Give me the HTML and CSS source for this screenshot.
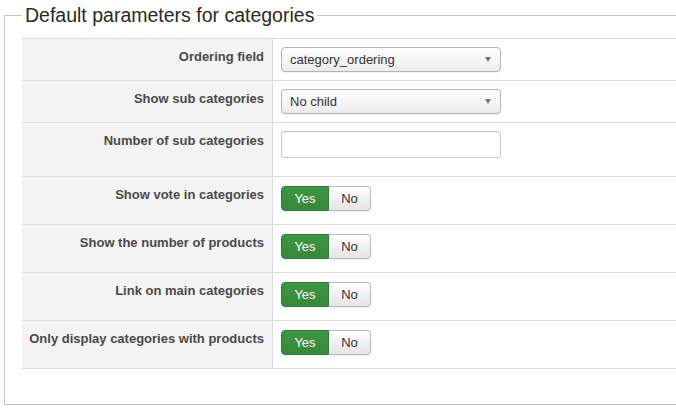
FILE: index.html
```html
<!DOCTYPE html>
<html>
<head>
<meta charset="utf-8">
<link rel="stylesheet" href="styles.css">
</head>
<body>
<fieldset class="panel">
  <legend class="panel-title">Default parameters for categories</legend>
  <div class="params">
    <div class="row">
      <div class="label">Ordering field</div>
      <div class="control">
        <div class="select"><span>category_ordering</span><i class="caret"></i></div>
      </div>
    </div>
    <div class="row">
      <div class="label">Show sub categories</div>
      <div class="control">
        <div class="select"><span>No child</span><i class="caret"></i></div>
      </div>
    </div>
    <div class="row">
      <div class="label">Number of sub categories</div>
      <div class="control">
        <div class="input"></div>
      </div>
    </div>
    <div class="row">
      <div class="label">Show vote in categories</div>
      <div class="control toggle-cell">
        <div class="toggle"><span class="btn yes">Yes</span><span class="btn no">No</span></div>
      </div>
    </div>
    <div class="row">
      <div class="label">Show the number of products</div>
      <div class="control toggle-cell">
        <div class="toggle"><span class="btn yes">Yes</span><span class="btn no">No</span></div>
      </div>
    </div>
    <div class="row">
      <div class="label">Link on main categories</div>
      <div class="control toggle-cell">
        <div class="toggle"><span class="btn yes">Yes</span><span class="btn no">No</span></div>
      </div>
    </div>
    <div class="row last">
      <div class="label">Only display categories with products</div>
      <div class="control toggle-cell">
        <div class="toggle"><span class="btn yes">Yes</span><span class="btn no">No</span></div>
      </div>
    </div>
  </div>
</fieldset>
</body>
</html>
```

FILE: styles.css
```css
html, body {
  margin: 0;
  padding: 0;
  background: #fff;
  overflow: hidden;
}

body {
  font-family: "Liberation Sans", Arial, sans-serif;
  color: #333;
  width: 676px;
  height: 410px;
}

.panel {
  margin: 0 0 0 4px;
  padding: 8px 0 35px 17px;
  border: 1px solid #c4c4c4;
  border-right: none;
  width: 672px;
  box-sizing: border-box;
  min-width: 0;
}

.panel-title {
  padding: 0 3px;
  margin: 0;
  font-size: 19.5px;
  line-height: 30px;
  color: #2a2a2a;
  font-weight: normal;
}

.params {
  display: flex;
  flex-direction: column;
}

.row {
  display: flex;
  border-top: 1px solid #ddd;
}

.row.last {
  border-bottom: 1px solid #ddd;
}

.label {
  width: 251px;
  flex: none;
  box-sizing: border-box;
  padding: 9px 8px 0 0;
  background: #f3f3f3;
  border-right: 1px solid #ddd;
  text-align: right;
  font-size: 13px;
  font-weight: bold;
  line-height: 18px;
  color: #4a4a4a;
}

.control {
  padding: 8px 0 8px 8px;
}

.toggle-cell {
  padding: 9px 0 13px 8px;
}

.select {
  width: 220px;
  height: 25px;
  box-sizing: border-box;
  border: 1px solid #b4b4b4;
  border-radius: 4px;
  background: linear-gradient(#ffffff, #ebebeb);
  box-shadow: 0 1px 1px rgba(0,0,0,0.06);
  display: flex;
  align-items: center;
  justify-content: space-between;
  padding: 0 9px 0 8px;
  font-size: 13px;
  color: #333;
}

.caret {
  width: 0;
  height: 0;
  border-left: 3.5px solid transparent;
  border-right: 3.5px solid transparent;
  border-top: 5px solid #777;
}

.input {
  width: 220px;
  height: 27px;
  box-sizing: border-box;
  border: 1px solid #c8c8c8;
  border-radius: 3px;
  background: #fff;
  box-shadow: inset 0 1px 1px rgba(0,0,0,0.06);
  margin-bottom: 10px;
}

.toggle {
  display: flex;
  height: 25px;
}

.btn {
  display: flex;
  align-items: center;
  justify-content: center;
  box-sizing: border-box;
  height: 25px;
  font-size: 13px;
}

.btn.yes {
  width: 48px;
  color: #fff;
  background: linear-gradient(#3e9642, #35893a);
  border: 1px solid #2f7d33;
  border-radius: 4px 0 0 4px;
}

.btn.no {
  width: 42px;
  color: #333;
  background: linear-gradient(#ffffff, #e4e4e4);
  border: 1px solid #bbb;
  border-left: none;
  border-radius: 0 4px 4px 0;
  box-shadow: 0 1px 1px rgba(0,0,0,0.06);
}
```
